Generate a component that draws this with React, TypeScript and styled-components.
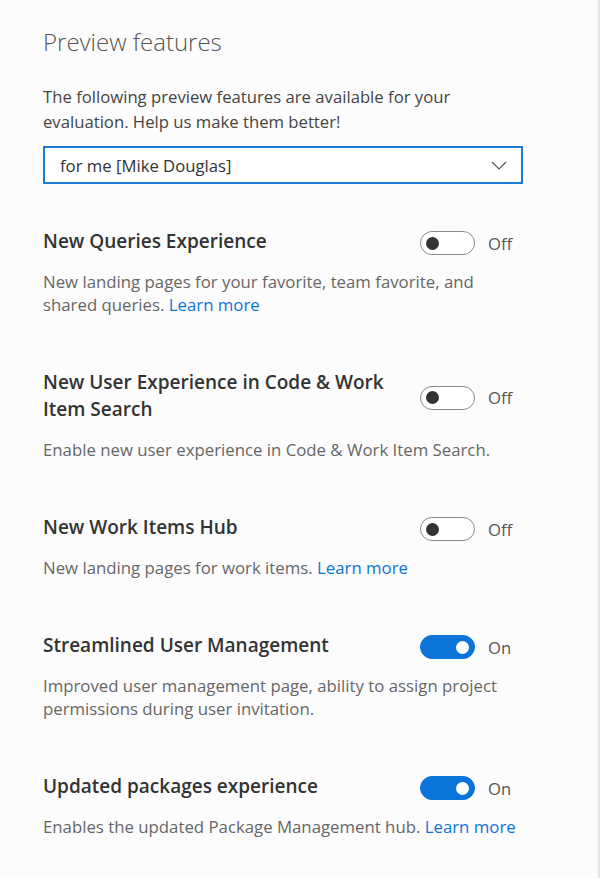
import styled, { createGlobalStyle } from 'styled-components';

const Global = createGlobalStyle`
    html, body {
        margin: 0;
        padding: 0;
        background: #fcfcfc;
    }
    body {
        font-family: "Open Sans", "Noto Sans", sans-serif;
        -webkit-font-smoothing: antialiased;
    }
`;

//
//Panel with the faint edge on the right
const Panel = styled.div`
    box-sizing: border-box;
    width: 600px;
    min-height: 878px;
    padding: 26px 75px 0 43px;
    background: #fcfcfc;
    border-right: 2px solid #e4e4e4;
`;

const Title = styled.h1`
    margin: 0;
    font-size: 24px;
    font-weight: 300;
    color: #555;
    line-height: 32px;
`;

const Intro = styled.p`
    margin: 26px 0 12px;
    font-size: 16.7px;
    line-height: 25px;
    color: #444;
`;

const Select = styled.div`
    box-sizing: border-box;
    height: 38px;
    border: 2px solid #1a7ad6;
    background: #fff;
    display: flex;
    align-items: center;
    justify-content: space-between;
    padding: 0 14px 0 15px;
    font-size: 16.7px;
    color: #333;
`;

const Feature = styled.section`
    margin-top: 53px;
    &:first-of-type {
        margin-top: 44px;
    }
`;

const Head = styled.div`
    display: flex;
    align-items: center;
`;

const Name = styled.h2`
    margin: 0;
    width: 377px;
    font-size: 19px;
    font-weight: 600;
    line-height: 27px;
    color: #333;
`;

const NameText = styled.span`
    display: block;
    max-width: 355px;
`;

const Switch = styled.div`
    display: flex;
    align-items: center;
    margin-top: 3px;
`;

const Toggle = styled.div<{ $on: boolean }>`
    box-sizing: border-box;
    width: 55px;
    height: 24px;
    border-radius: 12px;
    border: 1.5px solid ${(p) => (p.$on ? '#0a74d8' : '#8a8a8a')};
    background: ${(p) => (p.$on ? '#0a74d8' : '#fff')};
    display: flex;
    align-items: center;
    justify-content: ${(p) => (p.$on ? 'flex-end' : 'flex-start')};
    padding: 0 5px;
    &::after {
        content: '';
        width: 13px;
        height: 13px;
        border-radius: 50%;
        background: ${(p) => (p.$on ? '#fff' : '#333')};
    }
`;

const State = styled.span`
    margin-left: 13px;
    font-size: 16.7px;
    color: #555;
`;

const Desc = styled.p`
    margin: 15px 0 0;
    font-size: 16.8px;
    line-height: 23px;
    color: #666;
`;

const Link = styled.a`
    color: #0a74d8;
    text-decoration: none;
`;

const Chevron = () => (
    <svg width="16" height="9" viewBox="0 0 16 9">
        <path d="M1 1 L8 8 L15 1" fill="none" stroke="#555" strokeWidth="1.2" />
    </svg>
);

const features = [
    {
        name: 'New Queries Experience',
        on: false,
        desc: 'New landing pages for your favorite, team favorite, and shared queries.',
        link: true,
    },
    {
        name: 'New User Experience in Code & Work Item Search',
        on: false,
        desc: 'Enable new user experience in Code & Work Item Search.',
        link: false,
    },
    {
        name: 'New Work Items Hub',
        on: false,
        desc: 'New landing pages for work items.',
        link: true,
    },
    {
        name: 'Streamlined User Management',
        on: true,
        desc: 'Improved user management page, ability to assign project permissions during user invitation.',
        link: false,
    },
    {
        name: 'Updated packages experience',
        on: true,
        desc: 'Enables the updated Package Management hub.',
        link: true,
    },
];

const App = () => {
    return (
        <>
            <Global />
            <Panel>
                <Title>Preview features</Title>
                <Intro>The following preview features are available for your evaluation. Help us make them better!</Intro>
                <Select>
                    <span>for me [Mike Douglas]</span>
                    <Chevron />
                </Select>
                {features.map((f) => (
                    <Feature key={f.name}>
                        <Head>
                            <Name>
                                <NameText>{f.name}</NameText>
                            </Name>
                            <Switch>
                                <Toggle $on={f.on} />
                                <State>{f.on ? 'On' : 'Off'}</State>
                            </Switch>
                        </Head>
                        <Desc>
                            {f.desc}
                            {f.link && (
                                <>
                                    {' '}
                                    <Link href="#">Learn more</Link>
                                </>
                            )}
                        </Desc>
                    </Feature>
                ))}
            </Panel>
        </>
    );
};

export default App;
